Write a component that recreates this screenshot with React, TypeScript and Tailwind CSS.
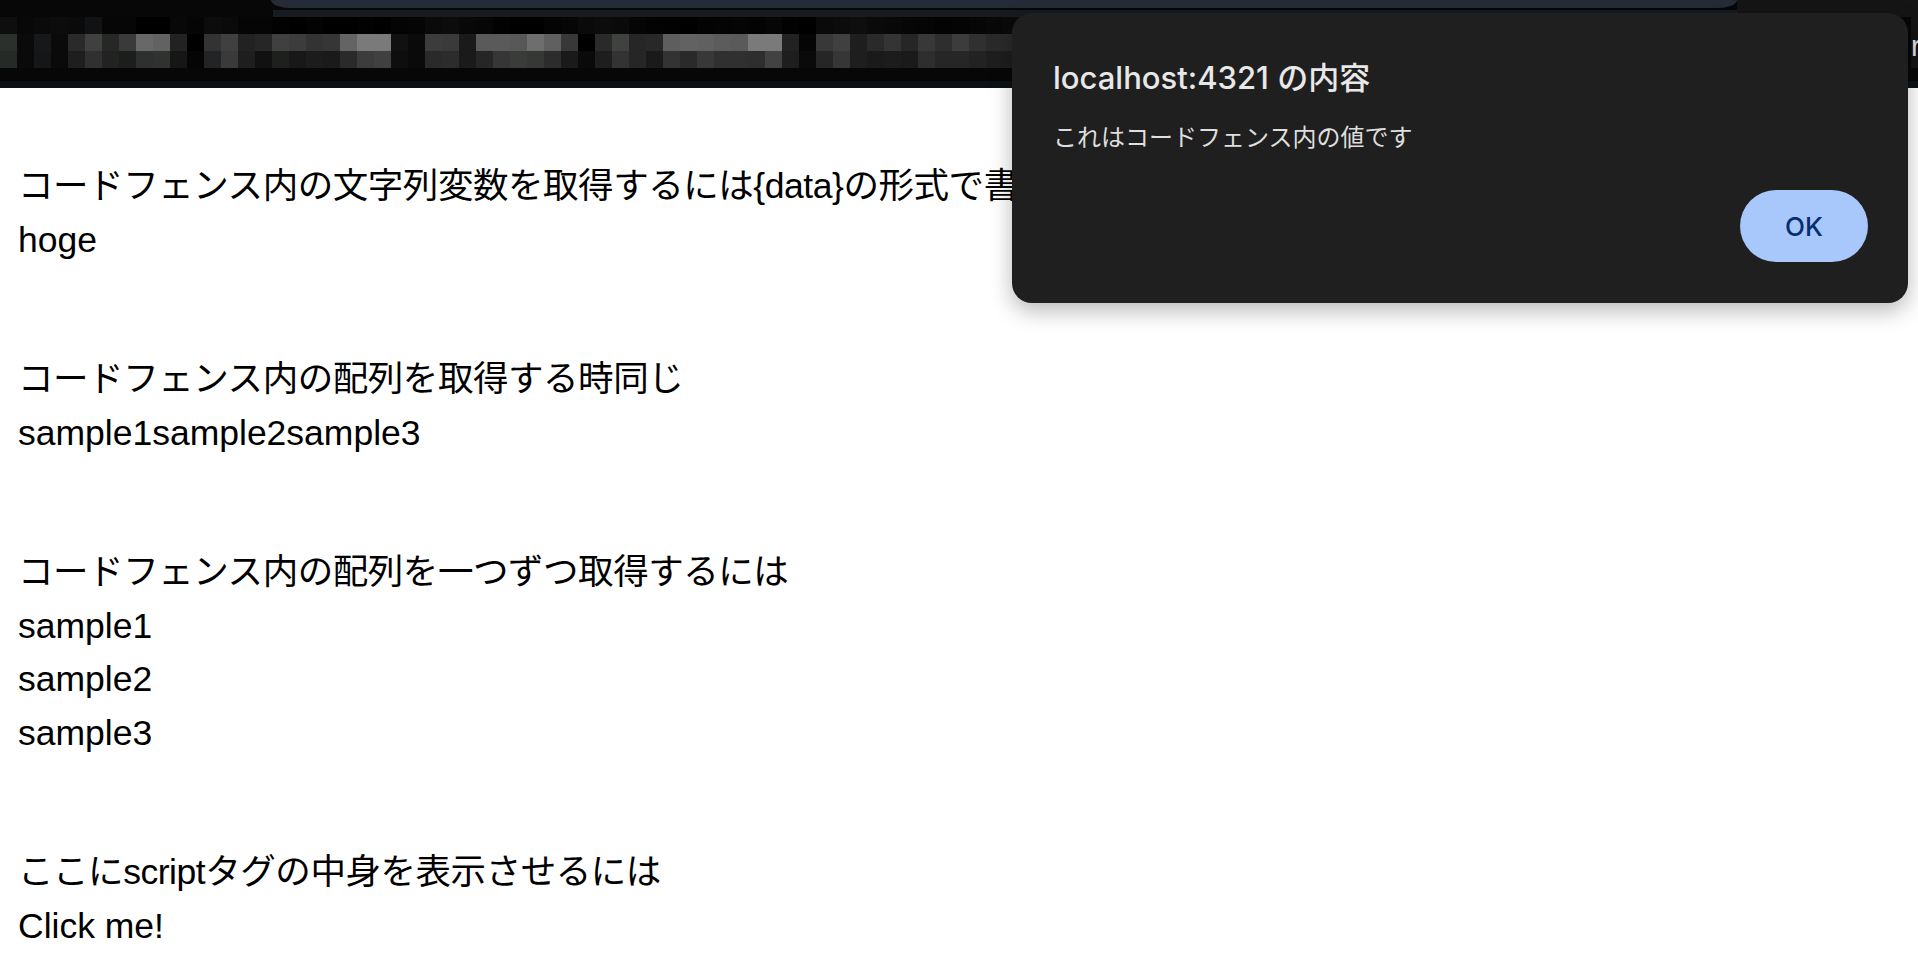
import type { ReactNode } from 'react'

// モザイク（ぼかし）部分の色。1マス 17px。
const ROW_TOP = [
  'bg-[#0e0e0e]', 'bg-[#080808]', 'bg-[#0a0a0a]', 'bg-[#0c0c0c]', 'bg-[#0a0a0a]', 'bg-[#101214]',
  'bg-[#060606]', 'bg-[#060606]', 'bg-[#000000]', 'bg-[#000000]', 'bg-[#080808]', 'bg-[#050505]',
  'bg-[#0c0c0c]', 'bg-[#0a0a0a]', 'bg-[#050505]', 'bg-[#050505]', 'bg-[#020202]', 'bg-[#000000]',
  'bg-[#030303]', 'bg-[#000000]', 'bg-[#000000]', 'bg-[#020202]', 'bg-[#000000]', 'bg-[#040404]',
  'bg-[#050505]', 'bg-[#0a0a0a]', 'bg-[#0c0c0c]', 'bg-[#080808]', 'bg-[#060606]', 'bg-[#020202]',
  'bg-[#000000]', 'bg-[#000000]', 'bg-[#040404]', 'bg-[#060606]', 'bg-[#0a0a0a]', 'bg-[#0c0c0c]',
  'bg-[#0a0a0a]', 'bg-[#050505]', 'bg-[#030303]', 'bg-[#020202]', 'bg-[#000000]', 'bg-[#030303]',
  'bg-[#040404]', 'bg-[#050505]', 'bg-[#030303]', 'bg-[#060606]', 'bg-[#020202]', 'bg-[#000000]',
  'bg-[#0a0a0a]', 'bg-[#0c0c0c]', 'bg-[#0e0e0e]', 'bg-[#0a0a0a]', 'bg-[#080808]', 'bg-[#060606]',
  'bg-[#050505]', 'bg-[#030303]', 'bg-[#040404]', 'bg-[#060606]', 'bg-[#080808]', 'bg-[#0a0a0a]',
]

const ROW_MID = [
  'bg-[#2c302c]', 'bg-[#0a0a0a]', 'bg-[#16181a]', 'bg-[#0a0a0a]', 'bg-[#2a2a2a]', 'bg-[#404040]',
  'bg-[#262826]', 'bg-[#3a3a3a]', 'bg-[#686868]', 'bg-[#626262]', 'bg-[#222222]', 'bg-[#000000]',
  'bg-[#333333]', 'bg-[#404040]', 'bg-[#222222]', 'bg-[#262626]', 'bg-[#404040]', 'bg-[#3c3c3c]',
  'bg-[#333333]', 'bg-[#363636]', 'bg-[#646464]', 'bg-[#7a7a7a]', 'bg-[#7a7a7a]', 'bg-[#111111]',
  'bg-[#0a0a0a]', 'bg-[#3c3c3c]', 'bg-[#3a3a3a]', 'bg-[#1a1a1a]', 'bg-[#5a5a5a]', 'bg-[#5a5a5a]',
  'bg-[#585858]', 'bg-[#6e6e6e]', 'bg-[#606060]', 'bg-[#383838]', 'bg-[#000000]', 'bg-[#2a2a2a]',
  'bg-[#404240]', 'bg-[#262626]', 'bg-[#282828]', 'bg-[#5e5e5e]', 'bg-[#626262]', 'bg-[#606060]',
  'bg-[#5c5c5c]', 'bg-[#5a5a5a]', 'bg-[#7a7a7a]', 'bg-[#7a7a7a]', 'bg-[#222222]', 'bg-[#050505]',
  'bg-[#383838]', 'bg-[#404040]', 'bg-[#1e1e1e]', 'bg-[#2a2a2a]', 'bg-[#343434]', 'bg-[#262626]',
  'bg-[#383838]', 'bg-[#2e2e2e]', 'bg-[#3c3c3c]', 'bg-[#303030]', 'bg-[#2a2a2a]', 'bg-[#2a2a2a]',
]

const ROW_LOW = [
  'bg-[#262a26]', 'bg-[#0a0a0a]', 'bg-[#141618]', 'bg-[#0a0a0a]', 'bg-[#1e1e1e]', 'bg-[#303030]',
  'bg-[#222222]', 'bg-[#1c1e1c]', 'bg-[#2e3030]', 'bg-[#303230]', 'bg-[#161616]', 'bg-[#050505]',
  'bg-[#222426]', 'bg-[#3a3a3a]', 'bg-[#1e1e1e]', 'bg-[#111111]', 'bg-[#1e201e]', 'bg-[#181818]',
  'bg-[#1c1c1c]', 'bg-[#1a1a1a]', 'bg-[#2a2a2a]', 'bg-[#3c3c3c]', 'bg-[#404040]', 'bg-[#0e0e0e]',
  'bg-[#0a0a0a]', 'bg-[#2a2a2a]', 'bg-[#2c2c2c]', 'bg-[#1a1a1a]', 'bg-[#262626]', 'bg-[#363636]',
  'bg-[#3a3c3a]', 'bg-[#363836]', 'bg-[#2c2c2c]', 'bg-[#1a1a1a]', 'bg-[#0a0a0a]', 'bg-[#1e1e1e]',
  'bg-[#333333]', 'bg-[#262626]', 'bg-[#1a1a1a]', 'bg-[#333333]', 'bg-[#2a2a2a]', 'bg-[#383838]',
  'bg-[#303030]', 'bg-[#303030]', 'bg-[#2e2e2e]', 'bg-[#424242]', 'bg-[#1e1e1e]', 'bg-[#0a0a0a]',
  'bg-[#262626]', 'bg-[#363636]', 'bg-[#1e1e1e]', 'bg-[#1a1a1a]', 'bg-[#1c1c1c]', 'bg-[#1a1a1a]',
  'bg-[#2e2e2e]', 'bg-[#262626]', 'bg-[#262626]', 'bg-[#222222]', 'bg-[#1e1e1e]', 'bg-[#1e1e1e]',
]

function MosaicRow({ cells }: { cells: string[] }) {
  return (
    <div className="flex h-[17px]">
      {cells.map((c, i) => (
        <div key={i} className={'h-full w-[17px] shrink-0 ' + c} />
      ))}
    </div>
  )
}

function Block({ children }: { children: ReactNode }) {
  return <div className="flex flex-col">{children}</div>
}

// 日本語の行は字間を少し詰める
function Ja({ children }: { children: ReactNode }) {
  return <p className="whitespace-nowrap tracking-[-0.45px]">{children}</p>
}

export default function App() {
  return (
    <div className="relative h-[978px] w-full overflow-hidden bg-white font-['Liberation_Sans','Noto_Sans_CJK_JP',sans-serif]">
      {/* ブラウザ上部（ぼかし済み） */}
      <header className="flex h-[88px] flex-col bg-[#070708]">
        <div className="flex h-[10px]">
          <div className="ml-[271px] h-[8px] w-[1466px] rounded-bl-[20px_8px] rounded-br-[20px_8px] bg-[#262c37]" />
          <div className="flex-1 bg-[#151515]" />
        </div>
        <div className="flex h-[7px]">
          <div className="ml-[273px] w-[1464px] bg-[#171b22]" />
          <div className="flex-1 bg-[#151515]" />
        </div>
        <div className="flex h-[51px]">
          <div className="flex flex-col overflow-hidden">
            <MosaicRow cells={ROW_TOP} />
            <MosaicRow cells={ROW_MID} />
            <MosaicRow cells={ROW_LOW} />
          </div>
          <div className="ml-auto flex w-[7px] overflow-hidden bg-[#141414] pt-[15px] text-[29px] leading-[29px] text-[#e0e0e0]">
            r
          </div>
        </div>
        <div className="h-[13px]" />
        <div className="h-[7px] bg-[#0d1115]" />
      </header>

      {/* 本文 */}
      <main className="flex flex-col gap-[86px] pl-[18px] pt-[72px] text-[35.5px] leading-[53.5px] text-black">
        <Block>
          <Ja>コードフェンス内の文字列変数を取得するには{'{data}'}の形式で書く</Ja>
          <p>hoge</p>
        </Block>
        <Block>
          <Ja>コードフェンス内の配列を取得する時同じ</Ja>
          <p>sample1sample2sample3</p>
        </Block>
        <Block>
          <Ja>コードフェンス内の配列を一つずつ取得するには</Ja>
          <p>sample1</p>
          <p>sample2</p>
          <p>sample3</p>
        </Block>
        <Block>
          <Ja>ここにscriptタグの中身を表示させるには</Ja>
          <p>Click me!</p>
        </Block>
      </main>

      {/* alert ダイアログ */}
      <div className="absolute left-[1012px] top-[13px] flex h-[290px] w-[896px] flex-col rounded-[20px] bg-[#1f1f1f] px-[41px] pt-[45px] shadow-[0_8px_22px_rgba(0,0,0,0.28)] font-['Inter','Noto_Sans_CJK_JP',sans-serif]">
        <h2 className="text-[31px] font-medium leading-[40px] text-[#e8e8e8]">localhost:4321 の内容</h2>
        <p className="mt-[23px] text-[24px] leading-[34px] text-[#dedede]">これはコードフェンス内の値です</p>
        <div className="mt-[35px] flex justify-end">
          <button className="mr-[-1px] flex h-[72px] w-[128px] items-center justify-center rounded-full bg-[#a8c7fa] text-[26px] font-medium text-[#062e6f]">
            OK
          </button>
        </div>
      </div>
    </div>
  )
}
